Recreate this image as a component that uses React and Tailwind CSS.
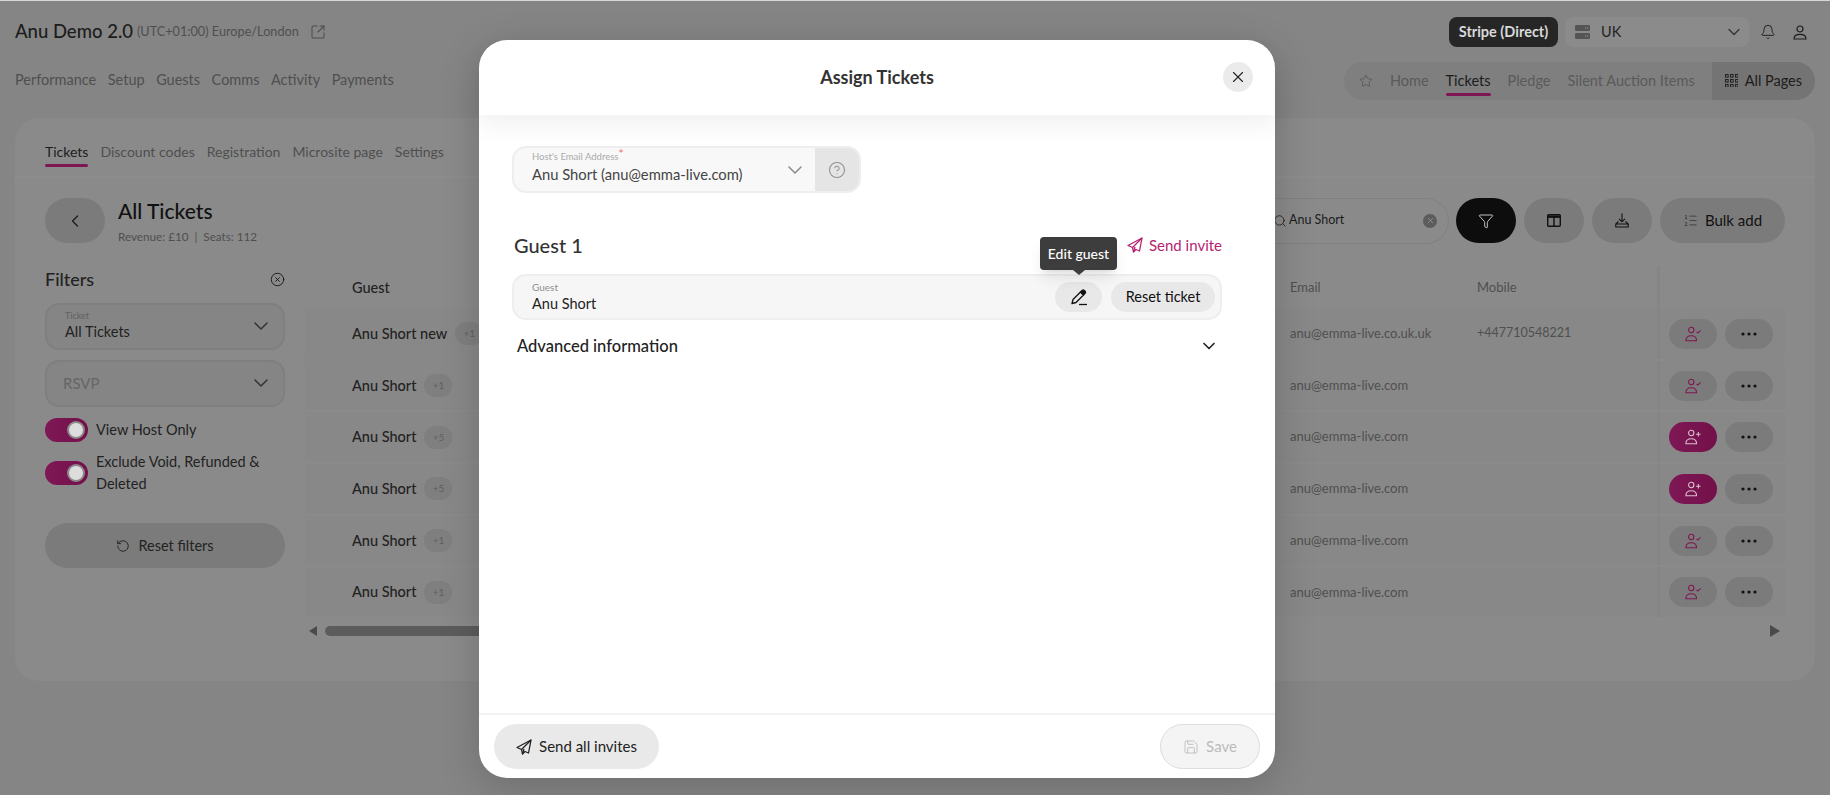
import {
  Bell, ChevronDown, ChevronLeft, CircleHelp, CircleX, Funnel, ListOrdered, RotateCcw, Save, Search,
  SquareArrowOutUpRight, Star, X,
} from 'lucide-react';

const rows = [
  { name: 'Anu Short new', plus: '+1', email: 'anu@emma-live.co.uk.uk', mobile: '+447710548221', assigned: true },
  { name: 'Anu Short', plus: '+1', email: 'anu@emma-live.com', mobile: '', assigned: true },
  { name: 'Anu Short', plus: '+5', email: 'anu@emma-live.com', mobile: '', assigned: false },
  { name: 'Anu Short', plus: '+5', email: 'anu@emma-live.com', mobile: '', assigned: false },
  { name: 'Anu Short', plus: '+1', email: 'anu@emma-live.com', mobile: '', assigned: true },
  { name: 'Anu Short', plus: '+1', email: 'anu@emma-live.com', mobile: '', assigned: true },
];

function PersonIcon({ assigned, className }) {
  return (
    <svg viewBox="0 0 20 18" fill="none" stroke="currentColor" strokeWidth="1.2" className={className}>
      <circle cx="8" cy="4.5" r="3" />
      <path d="M2 16.5c0-3.6 2.6-5.6 6-5.6s6 2 6 5.6z" strokeLinejoin="round" />
      {assigned ? <path d="M14 6.5l1.5 1.5 3-3" /> : <path d="M16 3.5v5M13.5 6h5" />}
    </svg>
  );
}

function ProfileIcon() {
  return (
    <svg viewBox="0 0 14 15" fill="none" stroke="#1c1c1c" strokeWidth="1.2" className="h-[15px] w-[14px]">
      <circle cx="7" cy="4" r="3" />
      <path d="M1 14c0-3 2.600-4.600 6-4.600s6 1.600 6 4.600z" strokeLinejoin="round" />
    </svg>
  );
}

function PlaneIcon({ className }) {
  return (
    <svg viewBox="0 0 16 16" fill="none" stroke="currentColor" strokeWidth="1.3" strokeLinejoin="round" className={className}>
      <path d="M15 1L1 8.500l4.500 2L6.500 15l2.500-2.500 3.500 1.500z" />
      <path d="M15 1L5.500 10.500M6.500 15L8 10" />
    </svg>
  );
}

function PencilIcon() {
  return (
    <svg viewBox="0 0 18 18" fill="none" stroke="#111" strokeWidth="1.3" strokeLinejoin="round" className="h-[18px] w-[18px]">
      <path d="M2 15.500l1-4L10.500 4l3 3L6 14.500z" />
      <path d="M10.500 4l1.600-1.600a1.500 1.500 0 0 1 2.100 0l.9.9a1.500 1.500 0 0 1 0 2.100L13.500 7z" fill="#111" />
      <path d="M9 16.500h8" />
    </svg>
  );
}

function DotsIcon() {
  return (
    <svg viewBox="0 0 16 4" className="h-1 w-4 fill-[#111]">
      <circle cx="2" cy="2" r="1.6" />
      <circle cx="8" cy="2" r="1.6" />
      <circle cx="14" cy="2" r="1.6" />
    </svg>
  );
}

function ServerIcon() {
  return (
    <svg viewBox="0 0 15 14" className="h-[14px] w-[15px]">
      <rect width="15" height="6" rx="1.2" fill="#555" />
      <rect y="8" width="15" height="6" rx="1.2" fill="#555" />
      <path d="M10 3h1M12 3h1M10 11h1M12 11h1" stroke="#999" />
    </svg>
  );
}

function GridIcon() {
  const cells = [0, 5, 10];
  return (
    <svg viewBox="0 0 13 13" fill="none" stroke="#222" strokeWidth="1" className="h-[13px] w-[13px]">
      {cells.map((y) => cells.map((x) => <rect key={`${x}-${y}`} x={x + 0.5} y={y + 0.5} width="2.6" height="2.6" />))}
    </svg>
  );
}

function ColumnsIcon() {
  return (
    <svg viewBox="0 0 14 13" fill="none" stroke="#111" strokeWidth="1.4" className="h-[13px] w-[14px]">
      <rect x="0.7" y="0.7" width="12.6" height="11.6" rx="1" />
      <path d="M0.7 2.7h12.6" strokeWidth="2.4" />
      <path d="M7 3v9" />
    </svg>
  );
}

function TrayIcon() {
  return (
    <svg viewBox="0 0 14 15" fill="none" stroke="#111" strokeWidth="1.1" className="h-[15px] w-[14px]">
      <path d="M7 0.5v8M4 5.8l3 3 3-3" />
      <path d="M3.5 8.5L0.8 11v3h12.4v-3l-2.7-2.5M0.8 11h12.4" />
    </svg>
  );
}

function Toggle() {
  return (
    <div className="flex h-6 w-[43px] shrink-0 items-center justify-end rounded-full bg-gradient-to-r from-[#7e1856] to-[#731049] pr-[3px]">
      <span className="h-[18px] w-[18px] rounded-full border-2 border-[#8a8a8a] bg-[#dddddd]" />
    </div>
  );
}

function GuestRow({ row }) {
  return (
    <div className="flex h-[51.7px] items-center border-b-2 border-[#8a8a8a] bg-[#888888]">
      <div className="flex w-[985px] items-center gap-2 pl-[47px]">
        <span className="text-[14.5px] font-medium text-[#222]">{row.name}</span>
        <span className="flex h-[23px] w-7 items-center justify-center rounded-full bg-[#7f7f7f] text-[10px] text-[#5f5f5f]">
          {row.plus}
        </span>
      </div>
      <div className="w-[187px] text-[13px] text-[#4f4f4f]">{row.email}</div>
      <div className="w-[180px] text-[12.5px] text-[#4f4f4f]">{row.mobile}</div>
      <div className="flex h-full w-[128px] items-center gap-2 border-l-[3px] border-[#858585] pl-[9px]">
        <div className={`flex h-[30px] w-[48px] items-center justify-center rounded-full ${row.assigned ? 'bg-[#7b7b7b] text-[#7f1654]' : 'bg-gradient-to-r from-[#7e1856] to-[#731049] text-[#d8c0cd]'}`}>
          <PersonIcon assigned={row.assigned} className="h-[16px] w-[18px]" />
        </div>
        <div className="flex h-[30px] w-[48px] items-center justify-center rounded-full bg-[#7b7b7b]">
          <DotsIcon />
        </div>
      </div>
    </div>
  );
}

function AssignTicketsModal() {
  return (
    <div className="absolute left-[479px] top-[39px] flex h-[738px] w-[796px] flex-col rounded-[28px] bg-white shadow-[0_10px_40px_rgba(0,0,0,0.18)]">
      <div className="relative flex h-[75px] shrink-0 items-center justify-center rounded-t-[28px] shadow-[0_10px_24px_rgba(0,0,0,0.06)]">
        <h2 className="text-[18px] font-bold text-[#333]">Assign Tickets</h2>
        <button className="absolute right-[22px] top-[22px] flex h-[30px] w-[30px] items-center justify-center rounded-full bg-[#ebebeb]">
          <X className="h-[18px] w-[18px] text-[#222]" strokeWidth={1.5} />
        </button>
      </div>

      <div className="flex-1 px-[33px] pt-[31px]">
        <div className="flex h-[47px] w-[349px] overflow-hidden rounded-[14px] border-2 border-[#eeeeee] bg-[#f8f8f8]">
          <div className="relative flex-1 pl-[18px] pt-[2px]">
            <p className="text-[9.5px] leading-[14px] text-[#aaaaaa]">
              Host's Email Address<span className="relative -top-[2px] text-[12px] leading-[0] text-[#f26b6b]">*</span>
            </p>
            <p className="text-[14.75px] leading-[20px] text-[#444]">Anu Short (anu@emma-live.com)</p>
            <ChevronDown className="absolute right-[8px] top-[10px] h-[24px] w-[24px] text-[#8a8a8a]" strokeWidth={1.5} />
          </div>
          <div className="flex w-[44px] items-center justify-center bg-[#e5e5e5]">
            <CircleHelp className="h-[18px] w-[18px] text-[#8f8f8f]" strokeWidth={1.4} />
          </div>
        </div>

        <div className="mt-[34px] flex h-[36px] w-[710px] items-center justify-between">
          <h3 className="pl-[2px] text-[20px] font-medium text-[#333]">Guest 1</h3>
          <div className="flex items-center gap-[6px] text-[15px] text-[#b3246f]">
            <PlaneIcon className="h-4 w-4" />
            Send invite
          </div>
        </div>

        <div className="relative mt-[11px] flex h-[46px] w-[710px] items-center justify-between rounded-[14px] border-2 border-[#eeeeee] bg-[#f6f6f6] pl-[18px] pr-[5px]">
          <div>
            <p className="text-[10px] leading-[14px] text-[#8f8f8f]">Guest</p>
            <p className="text-[14.5px] leading-[20px] text-[#222]">Anu Short</p>
          </div>
          <div className="flex items-center gap-[9px]">
            <button className="flex h-[30px] w-[47px] items-center justify-center rounded-full bg-[#e8e8e8]">
              <PencilIcon />
            </button>
            <button className="h-[30px] w-[104px] rounded-full bg-[#e8e8e8] text-[14.5px] text-[#111]">Reset ticket</button>
          </div>
          <div className="absolute right-[103px] top-[-39px] flex h-[33px] w-[77px] items-center justify-center rounded-[4px] bg-[#3d3d3d] text-[14px] font-medium text-white shadow-lg">
            Edit guest
            <span className="absolute bottom-[-5px] left-1/2 h-0 w-0 -translate-x-1/2 border-x-[6px] border-t-[5px] border-x-transparent border-t-[#3d3d3d]" />
          </div>
        </div>

        <div className="mt-[14px] flex w-[710px] items-center justify-between pl-[5px] pr-[3px]">
          <span className="text-[16.5px] font-medium text-[#222]">Advanced information</span>
          <ChevronDown className="h-5 w-5 text-[#222]" strokeWidth={2} />
        </div>
      </div>

      <div className="flex h-[65px] shrink-0 items-center justify-between rounded-b-[28px] border-t-2 border-[#f2f2f2] px-[15px]">
        <button className="flex h-[45px] w-[165px] items-center justify-center gap-[7px] rounded-full bg-[#e9e9e9] text-[15px] text-[#222]">
          <PlaneIcon className="h-4 w-4" />
          Send all invites
        </button>
        <button className="flex h-[45px] w-[100px] items-center justify-center gap-[7px] rounded-full border border-[#dddddd] bg-[#f4f4f4] text-[15px] text-[#bbbbbb]">
          <Save className="h-4 w-4" strokeWidth={1.3} />
          Save
        </button>
      </div>
    </div>
  );
}

export default function App() {
  return (
    <div className="relative h-[795px] w-full overflow-hidden border-t border-[#d8d8d8] bg-[#858585] font-['Lato',sans-serif]">
      <header className="px-[15px]">
        <div className="mt-[16px] flex h-[30px] items-center justify-between">
          <div className="flex items-center">
            <span className="text-[18.5px] font-medium text-[#1c1c1c]">Anu Demo 2.0</span>
            <span className="ml-[4px] text-[12.7px] text-[#4f4f4f]">(UTC+01:00) Europe/London</span>
            <SquareArrowOutUpRight className="ml-[11px] h-4 w-4 text-[#4f4f4f]" strokeWidth={1.6} />
          </div>
          <div className="flex items-center">
            <div className="flex h-[30px] w-[109px] items-center justify-center rounded-[8px] bg-[#262626] text-[14.5px] font-bold text-[#d9d9d9]">
              Stripe (Direct)
            </div>
            <div className="ml-[7px] flex h-[30px] w-[184px] items-center rounded-[8px] bg-[#8b8b8b] pl-[10px] pr-[5px]">
              <ServerIcon />
              <span className="ml-[11px] flex-1 text-[14.5px] text-[#222]">UK</span>
              <ChevronDown className="h-[20px] w-[20px] text-[#333]" strokeWidth={1.5} />
            </div>
            <Bell className="ml-[11px] h-4 w-4 text-[#1c1c1c]" strokeWidth={1.4} />
            <div className="ml-[17px] mr-[8px]">
              <ProfileIcon />
            </div>
          </div>
        </div>

        <div className="mt-[14px] flex h-[38px] items-center justify-between">
          <nav className="flex gap-[11.5px] text-[14.5px] text-[#4f4f4f]">
            {['Performance', 'Setup', 'Guests', 'Comms', 'Activity', 'Payments'].map((item) => (
              <span key={item}>{item}</span>
            ))}
          </nav>
          <div className="mt-[1px] flex h-[38px] w-[471px] items-center gap-[17px] overflow-hidden whitespace-nowrap rounded-full bg-[#7f7f7f] pl-[15px] text-[14.5px]">
            <Star className="h-[14px] w-[14px] text-[#4f4f4f]" strokeWidth={1.2} />
            <span className="text-[#5a5a5a]">Home</span>
            <span className="relative text-[#1c1c1c]">
              Tickets
              <span className="absolute bottom-[-5px] left-0 h-[3px] w-full rounded-full bg-[#7f1654]" />
            </span>
            <span className="text-[#5a5a5a]">Pledge</span>
            <span className="text-[#5a5a5a]">Silent Auction Items</span>
            <div className="ml-auto flex h-full w-[104px] items-center justify-center gap-[7px] bg-[#747474] text-[#1c1c1c]">
              <GridIcon />
              All Pages
            </div>
          </div>
        </div>
      </header>

      <main className="mx-[15px] mt-[19px] h-[563px] rounded-[24px] bg-[#8a8a8a]">
        <div className="flex h-[60px] items-center gap-[12px] border-b-2 border-[#8d8d8d] px-[30px] pt-[8px] text-[14px] text-[#4f4f4f]">
          <span className="relative text-[#1c1c1c]">
            Tickets
            <span className="absolute bottom-[-5px] left-0 h-[3px] w-full rounded-full bg-[#7f1654]" />
          </span>
          <span>Discount codes</span>
          <span>Registration</span>
          <span>Microsite page</span>
          <span>Settings</span>
        </div>

        <div className="px-[30px] pt-[20px]">
          <div className="flex h-[45px] items-center">
            <div className="flex h-[45px] w-[60px] items-center justify-center rounded-full bg-[#7b7b7b]">
              <ChevronLeft className="h-5 w-5 text-[#1c1c1c]" strokeWidth={1.5} />
            </div>
            <div className="ml-[13px]">
              <p className="text-[21px] font-medium leading-[26px] text-[#111]">All Tickets</p>
              <p className="mt-[4px] text-[11.7px] leading-[16px] text-[#4f4f4f]">Revenue: £10&nbsp; | &nbsp;Seats: 112</p>
            </div>
            <div className="ml-auto flex h-[46px] w-[201px] items-center rounded-full border border-[#808080] pl-[24px] pr-[11px]">
              <Search className="h-[14px] w-[14px] text-[#222]" strokeWidth={1.5} />
              <span className="ml-[2px] flex-1 text-[12.5px] text-[#1c1c1c]">Anu Short</span>
              <span className="flex h-[14px] w-[14px] items-center justify-center rounded-full bg-[#5c5c5c]">
                <X className="h-[9px] w-[9px] text-[#999]" strokeWidth={2} />
              </span>
            </div>
            <div className="ml-[7px] flex h-[45px] w-[60px] items-center justify-center rounded-full bg-[#0d0d0d]">
              <Funnel className="h-[16px] w-[16px] text-[#dddddd]" strokeWidth={1.3} />
            </div>
            <div className="ml-[8px] flex h-[45px] w-[60px] items-center justify-center rounded-full bg-[#7b7b7b]">
              <ColumnsIcon />
            </div>
            <div className="ml-[8px] flex h-[45px] w-[60px] items-center justify-center rounded-full bg-[#7b7b7b]">
              <TrayIcon />
            </div>
            <div className="ml-[8px] flex h-[45px] w-[125px] items-center justify-center gap-[7px] rounded-full bg-[#7b7b7b] text-[15px] text-[#111]">
              <ListOrdered className="h-[15px] w-[15px] text-[#333]" strokeWidth={1.2} />
              Bulk add
            </div>
          </div>

          <div className="mt-[23px] flex">
            <aside className="w-[240px] shrink-0 pt-[1px]">
              <div className="flex h-[24px] items-center justify-between">
                <h3 className="text-[18px] font-medium text-[#222]">Filters</h3>
                <CircleX className="h-[15px] w-[15px] text-[#111]" strokeWidth={1.4} />
              </div>
              <div className="relative mt-[12px] h-[47px] rounded-[14px] border-2 border-[#7f7f7f] bg-[#858585] pl-[18px] pt-[5px]">
                <p className="text-[9px] leading-[12px] text-[#5f5f5f]">Ticket</p>
                <p className="text-[14.5px] leading-[20px] text-[#222]">All Tickets</p>
                <ChevronDown className="absolute right-[10px] top-[9px] h-[24px] w-[24px] text-[#333]" strokeWidth={1.5} />
              </div>
              <div className="relative mt-[10px] flex h-[47px] items-center rounded-[14px] border-2 border-[#7f7f7f] bg-[#858585] pl-[16px] text-[15px] text-[#666]">
                RSVP
                <ChevronDown className="absolute right-[10px] top-[9px] h-[24px] w-[24px] text-[#333]" strokeWidth={1.5} />
              </div>
              <div className="mt-[11px] flex items-center gap-2 text-[14.5px] text-[#222]">
                <Toggle />
                View Host Only
              </div>
              <div className="mt-[9px] flex items-center gap-2 text-[14.5px] leading-[22px] text-[#222]">
                <Toggle />
                <span>Exclude Void, Refunded &amp; Deleted</span>
              </div>
              <button className="mt-[28px] flex h-[45px] w-full items-center justify-center gap-2 rounded-full bg-[#7b7b7b] text-[14.5px] text-[#222]">
                <RotateCcw className="h-[14px] w-[14px]" strokeWidth={1.6} />
                Reset filters
              </button>
            </aside>

            <section className="ml-[20px] flex-1">
              <div className="flex h-[43px] items-center text-[14.5px]">
                <div className="w-[985px] pl-[47px] font-medium text-[#222]">Guest</div>
                <div className="w-[187px] text-[13px] text-[#4f4f4f]">Email</div>
                <div className="w-[180px] text-[13px] text-[#4f4f4f]">Mobile</div>
                <div className="h-full w-[128px] border-l-[3px] border-[#858585]" />
              </div>
              {rows.map((row, i) => (
                <GuestRow key={i} row={row} />
              ))}
              <div className="mt-[5px] flex h-[14px] items-center pl-[4px]">
                <span className="h-0 w-0 border-y-[5px] border-r-[8px] border-y-transparent border-r-[#4a4a4a]" />
                <div className="ml-[8px] h-[10px] w-[400px] rounded-full bg-[#5c5c5c]" />
                <span className="ml-auto mr-[5px] h-0 w-0 border-y-[6px] border-l-[10px] border-y-transparent border-l-[#4a4a4a]" />
              </div>
            </section>
          </div>
        </div>
      </main>

      <AssignTicketsModal />
    </div>
  );
}
